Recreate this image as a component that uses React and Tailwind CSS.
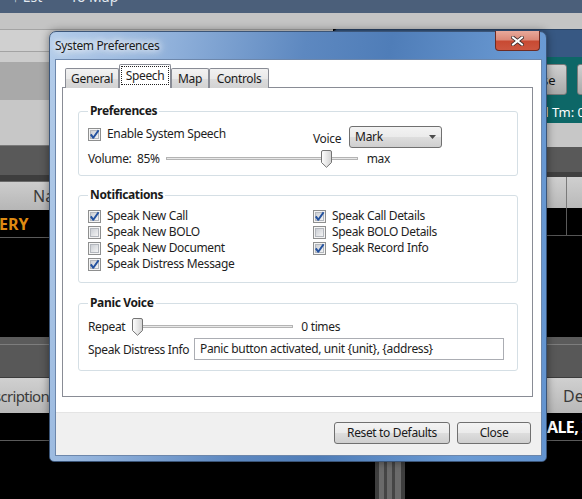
import React from "react";

const FONT = "font-['Noto_Sans',sans-serif]";
const BTN_BG =
  "bg-[linear-gradient(#f3f3f3_0%,#ebebeb_48%,#dddddd_52%,#cfcfcf_100%)]";

function CheckBox({ checked }) {
  return (
    <svg width="13" height="13" viewBox="0 0 13 13" className="shrink-0">
      <defs>
        <linearGradient id="cbInner" x1="0" y1="0" x2="1" y2="1">
          <stop offset="0" stopColor="#c8ccd2" />
          <stop offset="1" stopColor="#f6f6f6" />
        </linearGradient>
      </defs>
      <rect x="0.5" y="0.5" width="12" height="12" fill="#f4f4f4" stroke="#8e8f8f" />
      <rect x="2.5" y="2.5" width="8" height="8" fill="url(#cbInner)" stroke="#b3b7bd" />
      {checked && (
        <path
          d="M2.8 6.4 L5.3 9.8 L10.6 2.2"
          fill="none"
          stroke="#24529f"
          strokeWidth="2"
          strokeLinejoin="round"
        />
      )}
    </svg>
  );
}

function CheckRow({ checked, label }) {
  return (
    <div className="flex items-center h-[16px]">
      <CheckBox checked={checked} />
      <span className="ml-[6px] whitespace-nowrap">{label}</span>
    </div>
  );
}

function Thumb() {
  return (
    <svg width="11" height="18" viewBox="0 0 11 18">
      <defs>
        <linearGradient id="thumbG" x1="0" y1="0" x2="1" y2="0">
          <stop offset="0" stopColor="#ffffff" />
          <stop offset="1" stopColor="#d2d2d2" />
        </linearGradient>
      </defs>
      <path
        d="M0.5 2 Q0.5 0.5 2 0.5 H9 Q10.5 0.5 10.5 2 V12.5 L5.5 17.3 L0.5 12.5 Z"
        fill="url(#thumbG)"
        stroke="#747474"
      />
    </svg>
  );
}

function Slider({ widthClass, thumbClass }) {
  return (
    <div className={`relative h-[17px] shrink-0 ${widthClass}`}>
      <div className="absolute left-0 right-0 top-[7px] h-[3px] border border-[#b4b4b4] bg-[#e8e8e8]" />
      <div className={`absolute top-0 ${thumbClass}`}>
        <Thumb />
      </div>
    </div>
  );
}

function Group({ title, children, className = "" }) {
  return (
    <fieldset
      className={`border border-[#d5dfe5] rounded-[3px] pl-[9px] pr-[13px] ${className}`}
    >
      <legend className="px-[2px] font-bold text-[12px] leading-[16px] text-[#1a1a1a]">
        {title}
      </legend>
      {children}
    </fieldset>
  );
}

function Button({ children, w }) {
  return (
    <div
      className={`h-[22px] ${w} border border-[#707070] rounded-[3px] ${BTN_BG} flex items-center justify-center text-[#1a1a1a]`}
    >
      {children}
    </div>
  );
}

function Tab({ label, w }) {
  return (
    <div
      className={`h-[20px] ${w} border border-b-0 border-[#898c95] rounded-t-[2px] bg-[linear-gradient(#f2f2f2_0%,#e9e9e9_50%,#dcdcdc_52%,#d3d3d3_100%)] flex items-center justify-center pt-[1px] text-[#1a1a1a]`}
    >
      {label}
    </div>
  );
}

function Dialog() {
  return (
    <div className="absolute left-[49px] top-[31px] w-[498px] h-[431px] rounded-t-[7px] rounded-b-[5px] border border-[#3b5578] bg-[linear-gradient(100deg,#b4cdea_0%,#8fb0da_22%,#5d88c0_45%,#4f7db8_60%,#6b9bd4_85%,#6293cf_100%)] shadow-[0_0_8px_rgba(0,0,0,0.45)] flex flex-col tracking-[-0.35px]">
      {/* title bar */}
      <div className="h-[27px] flex items-start shrink-0">
        <div className="pl-[5px] pt-[5px] text-[12px] leading-[18px] text-[#1b1b1b] [text-shadow:0_0_6px_#ffffff,0_0_10px_#ffffff,0_0_14px_#ffffff]">
          System Preferences
        </div>
        <div className="ml-auto mr-[6px] -mt-[1px] w-[45px] h-[20px] border border-[#6e2b22] border-t-0 rounded-b-[4px] bg-[linear-gradient(#e9a99b_0%,#dc8a79_45%,#c84a33_55%,#cc5640_100%)] flex items-center justify-center">
          <svg width="13" height="10" viewBox="0 0 13 10">
            <path d="M2 1.5 L11 8.5 M11 1.5 L2 8.5" stroke="#3b2a2a" strokeWidth="3.6" strokeLinecap="square" />
            <path d="M2 1.5 L11 8.5 M11 1.5 L2 8.5" stroke="#ffffff" strokeWidth="2" strokeLinecap="square" />
          </svg>
        </div>
      </div>
      {/* client */}
      <div className="ml-[5px] w-[487px] h-[397px] border border-[#6d87ab] bg-white flex flex-col text-[12px] leading-[16px] text-[#1e1e1e]">
        <div className="pt-[4px] pl-[6px]">
          {/* tabs */}
          <div className="flex items-end ml-[3px] h-[24px] -mb-[1px] relative z-10">
            <Tab label="General" w="w-[54px]" />
            <div className="h-[24px] w-[52px] bg-white border border-b-0 border-[#898c95] rounded-t-[2px] pt-[1px] pl-[1px]">
              <div className="w-[48px] h-[19px] border border-dotted border-[#222] flex items-center justify-center">
                Speech
              </div>
            </div>
            <Tab label="Map" w="w-[38px]" />
            <Tab label="Controls" w="w-[60px]" />
          </div>
          {/* panel */}
          <div className="w-[471px] h-[310px] border border-[#898c95] bg-white pl-[15px] pr-[14px] pt-[15px]">
            <Group title="Preferences" className="pb-[8px]">
              <div className="pt-[7px] flex h-[31px]">
                <div className="w-[225px] flex items-start">
                  <CheckRow checked label="Enable System Speech" />
                </div>
                <div className="mt-[5px]">Voice</div>
                <div
                  className={`ml-[8px] w-[93px] h-[22px] border border-[#707070] rounded-[3px] ${BTN_BG} flex items-center pl-[5px] pr-[5px] text-[#1a1a1a]`}
                >
                  <span>Mark</span>
                  <svg className="ml-auto" width="7" height="4" viewBox="0 0 7 4">
                    <path d="M0 0 H7 L3.5 4 Z" fill="#4a4a4a" />
                  </svg>
                </div>
              </div>
              <div className="flex items-center h-[17px]">
                <span className="whitespace-pre">Volume:  85%</span>
                <div className="ml-[6px]">
                  <Slider widthClass="w-[192px]" thumbClass="left-[155px]" />
                </div>
                <span className="ml-[9px]">max</span>
              </div>
            </Group>
            <Group title="Notifications" className="mt-[11px] pb-[10px]">
              <div className="pt-[5px] grid grid-cols-[225px_1fr]">
                <div className="flex flex-col">
                  <CheckRow checked label="Speak New Call" />
                  <CheckRow label="Speak New BOLO" />
                  <CheckRow label="Speak New Document" />
                  <CheckRow checked label="Speak Distress Message" />
                </div>
                <div className="flex flex-col">
                  <CheckRow checked label="Speak Call Details" />
                  <CheckRow label="Speak BOLO Details" />
                  <CheckRow checked label="Speak Record Info" />
                </div>
              </div>
            </Group>
            <Group title="Panic Voice" className="mt-[12px] pb-[10px]">
              <div className="pt-[7px] flex items-center h-[24px]">
                <span>Repeat</span>
                <div className="ml-[7px]">
                  <Slider widthClass="w-[161px]" thumbClass="left-0" />
                </div>
                <span className="ml-[8px]">0 times</span>
              </div>
              <div className="mt-[3px] flex items-center h-[22px]">
                <span className="w-[106px] pt-[2px] whitespace-nowrap">Speak Distress Info</span>
                <div className="w-[310px] h-[22px] border border-[#abadb3] flex items-center pl-[5px] whitespace-nowrap overflow-hidden">
                  Panic button activated, unit {"{unit}"}, {"{address}"}
                </div>
              </div>
            </Group>
          </div>
        </div>
        {/* footer */}
        <div className="mt-auto h-[43px] bg-[#f0f0f0] border-t border-[#e4e4e4] flex justify-end items-start pt-[9px] pr-[10px] gap-[7px]">
          <Button w="w-[116px]">Reset to Defaults</Button>
          <Button w="w-[74px]">Close</Button>
        </div>
      </div>
    </div>
  );
}

export default function App() {
  return (
    <div className={`relative w-[582px] h-[499px] overflow-hidden bg-black ${FONT}`}>
      {/* background app */}
      <div className="flex flex-col w-full h-full">
        <div className="h-[13px] bg-[#4b5f7a] overflow-hidden flex text-[14px] leading-[14px] text-[#e2e8ef]">
          <span className="-mt-[10px] ml-[12px] whitespace-pre">↑ Est</span>
          <span className="-mt-[10px] ml-[28px] whitespace-pre">To Map</span>
        </div>
        <div className="h-[16px] bg-[#c4c4c4]" />
        <div className="flex flex-1 min-h-0">
          {/* left column */}
          <div className="w-[333px] flex flex-col text-[16px] leading-[20px]">
            <div className="h-[23px] bg-[#d0d0d0] border-t border-b border-[#a3a3a3]" />
            <div className="h-[10px] bg-[#cccccc]" />
            <div className="h-[38px] bg-[#a9a9a9]" />
            <div className="h-[45px] bg-[#c7c7c7]" />
            <div className="h-[30px] bg-[#595959] border-t border-[#7a7a7a]" />
            <div className="h-[7px] bg-[#3e3e3e] border-b border-[#6a6a6a]" />
            <div className="h-[28px] bg-[linear-gradient(#cdcdcd,#b6b6b6)] flex items-center pl-[33px] text-[#3a3a3a]">
              Name
            </div>
            <div className="h-[28px] bg-black border-b border-[#5a5a5a] flex items-center font-bold text-[#dd8a12]">
              <span className="-ml-[1px]">ERY</span>
            </div>
            <div className="h-[99px] bg-black" />
            <div className="h-[8px] bg-[#5b5b5b] border-b border-[#7d7d7d]" />
            <div className="h-[33px] bg-[#585858] border-b border-[#3c3c3c]" />
            <div className="h-[35px] bg-[linear-gradient(#d0d0d0,#b8b8b8)] flex items-center text-[#3a3a3a] text-[15px] tracking-[-0.7px]">
              <div className="w-[49px] flex justify-end overflow-hidden whitespace-nowrap">
                Description
              </div>
            </div>
            <div className="h-[28px] bg-black border-b border-[#5a5a5a]" />
            <div className="flex-1 bg-black" />
          </div>
          {/* right column */}
          <div className="flex-1 flex flex-col overflow-hidden text-[16px] leading-[20px]">
            <div className="h-[28px] bg-[#375883] rounded-tl-[5px] border-t border-[#2a4466]" />
            <div className="h-[66px] bg-[#0d6767] flex flex-col">
              <div className="pt-[7px] pl-[164px] flex gap-[10px] text-[13px] text-[#111]">
                <div className="w-[70px] h-[31px] shrink-0 rounded-[3px] border border-[#7a7a7a] bg-[linear-gradient(#d0d0d0,#a9a9a9)] flex items-center justify-center pl-[14px]">
                  Close
                </div>
                <div className="w-[60px] h-[31px] shrink-0 rounded-[3px] border border-[#7a7a7a] bg-[linear-gradient(#d0d0d0,#a9a9a9)]" />
              </div>
              <div className="pl-[186px] mt-[9px] text-[13px] leading-[16px] text-white whitespace-nowrap">
                Total Tm: 00:00
              </div>
            </div>
            <div className="h-[24px] bg-[#c7c7c7]" />
            <div className="h-[25px] bg-[#595959]" />
            <div className="h-[5px] bg-[#404040]" />
            <div className="h-[31px] bg-[linear-gradient(#cfcfcf,#b9b9b9)] flex">
              <div className="w-[234px] border-r border-[#7a7a7a]" />
            </div>
            <div className="h-[28px] bg-black border-b border-[#555] flex">
              <div className="w-[234px] border-r border-[#5a5a5a]" />
            </div>
            <div className="h-[101px] bg-black" />
            <div className="h-[8px] bg-[#5b5b5b] border-b border-[#7d7d7d]" />
            <div className="h-[33px] bg-[#585858] border-b border-[#3c3c3c]" />
            <div className="h-[35px] bg-[linear-gradient(#d0d0d0,#b8b8b8)] flex items-center pl-[230px] text-[#3a3a3a] whitespace-nowrap">
              Description
            </div>
            <div className="h-[28px] bg-black border-b border-[#5a5a5a] flex items-center pl-[214px] font-bold text-white whitespace-nowrap tracking-[-0.6px]">
              ALE, IAN
            </div>
            <div className="flex-1 bg-black flex pl-[42px]">
              <div className="w-[4px] bg-[#3e3e3e]" />
              <div className="w-[5px] bg-[#6a6a6a]" />
              <div className="w-[3px] bg-[#454545]" />
              <div className="w-[5px] bg-[#6a6a6a]" />
              <div className="w-[3px] bg-[#454545]" />
              <div className="w-[6px] bg-[#6a6a6a]" />
              <div className="w-[4px] bg-[#3e3e3e]" />
            </div>
          </div>
        </div>
      </div>
      <Dialog />
    </div>
  );
}
